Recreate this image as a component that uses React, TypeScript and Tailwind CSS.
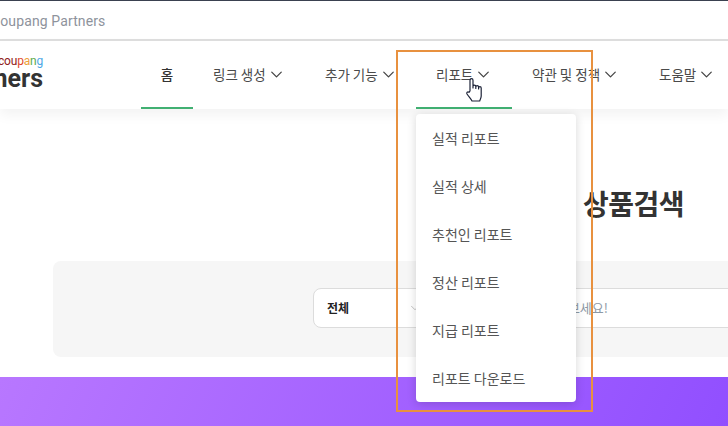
import { ChevronDown } from "lucide-react";

const Nav = ({ label, w, ml = 0 , active = false }: { label: string; w: number; ml?: number; active?: boolean }) => (
  <div
    className={`h-[68px] flex items-center pl-5 text-[13.5px] text-[#4a4a4a] shrink-0 border-b-2 ${active ? "border-[#41b072]" : "border-transparent"}`}
    style={{ width: w, marginLeft: ml }}
  >
    <span className="whitespace-nowrap">{label}</span>
    <ChevronDown size={19} strokeWidth={1.6} className="ml-[1px] text-[#444] shrink-0" />
  </div>
);

const MenuItem = ({ label }: { label: string }) => (
  <div className="h-12 flex items-center pl-4 text-[14px] text-[#555]">{label}</div>
);

export default function App() {
  return (
    <div
      className="relative w-[728px] h-[426px] overflow-hidden bg-white flex flex-col"
      style={{ fontFamily: '"Noto Sans CJK KR", "Noto Sans", sans-serif' }}
    >
      <div className="h-[41px] shrink-0 border-t border-t-[#3a4150] border-b-2 border-b-[#dedede] flex items-center pt-[2px]">
        <span className="ml-[-9px] text-[14px] text-[#8e939c] tracking-[0.12px]" style={{ fontFamily: "Roboto, sans-serif" }}>
          Coupang Partners
        </span>
      </div>

      <div className="h-[68px] shrink-0 flex shadow-[0_6px_12px_rgba(0,0,0,0.05)] relative z-10 bg-white">
        <div className="w-[141px] shrink-0 flex flex-col items-end pr-[98px] pt-[14px]" style={{ fontFamily: "Roboto, sans-serif" }}>
          <div className="text-[12px] leading-[13px] tracking-[-0.2px] whitespace-nowrap">
            <span className="text-[#8f2020]">cou</span>
            <span className="text-[#e0452c]">p</span>
            <span className="text-[#eda13a]">a</span>
            <span className="text-[#5bab4a]">n</span>
            <span className="text-[#4ea7e6]">g</span>
          </div>
          <div className="text-[25px] leading-[22px] font-bold text-[#333] whitespace-nowrap">ners</div>
        </div>
        <div className="h-[68px] w-[52px] shrink-0 flex items-center justify-center text-[13.5px] font-medium text-[#333] border-b-2 border-[#41b072]">
          홈
        </div>
        <Nav label="링크 생성" w={108} />
        <Nav label="추가 기능" w={108} ml={4} />
        <Nav label="리포트" w={96} ml={3} active />
        <Nav label="약관 및 정책" w={124} />
        <Nav label="도움말" w={89} ml={3} />
      </div>

      <div className="flex-1 flex flex-col">
        <div className="h-[152px] shrink-0 flex pl-[583px] pt-[76px]">
          <h1 className="text-[28px] leading-[36px] font-bold tracking-[-0.5px] text-[#333] whitespace-nowrap">상품검색</h1>
        </div>
        <div className="ml-[53px] w-[1160px] h-24 shrink-0 bg-[#f6f6f6] rounded-lg flex items-center pl-[260px] pb-[2px]">
          <div className="w-[800px] h-10 bg-white border border-[#dcdcdc] rounded-lg flex items-center">
            <div className="w-[108px] pl-[13px] flex items-center justify-between">
              <span className="text-[12px] font-bold text-[#222]">전체</span>
              <ChevronDown size={14} strokeWidth={1.2} className="text-[#aaa]" />
            </div>
            <span className="text-[13px] text-[#8d99a5] w-[186px] text-right whitespace-nowrap">상품명을 입력해보세요!</span>
          </div>
        </div>
        <div className="mt-5 flex-1 bg-[linear-gradient(115deg,#b877ff,#914fff)]" />
      </div>

      {/* open dropdown */}
      <div className="absolute z-20 left-[416px] top-[114px] w-40 rounded bg-white shadow-[0_2px_10px_rgba(0,0,0,0.16)]">
        <MenuItem label="실적 리포트" />
        <MenuItem label="실적 상세" />
        <MenuItem label="추천인 리포트" />
        <MenuItem label="정산 리포트" />
        <MenuItem label="지급 리포트" />
        <MenuItem label="리포트 다운로드" />
      </div>

      {/* annotation rectangle */}
      <div className="absolute z-30 left-[396px] top-[50px] w-[197px] h-[362px] border-2 border-[#e8913f]" />

      {/* mouse cursor */}
      <svg className="absolute z-40 left-[465px] top-[77px]" width="20" height="26" viewBox="0 0 20 26" fill="#fff" stroke="#1d2338" strokeWidth="1.2" strokeLinejoin="round">
        <path d="M5 14V3.2a1.5 1.5 0 0 1 3 0V11V9.5a1.4 1.4 0 0 1 2.8 0V11.5V10a1.4 1.4 0 0 1 2.8 0V12V11a1.3 1.3 0 0 1 2.6 0V19c0 2-1 3-1.5 5H7c-1-2-3-4-5-7-.8-1.3.6-2.8 2-1.7Z" />
      </svg>
    </div>
  );
}
